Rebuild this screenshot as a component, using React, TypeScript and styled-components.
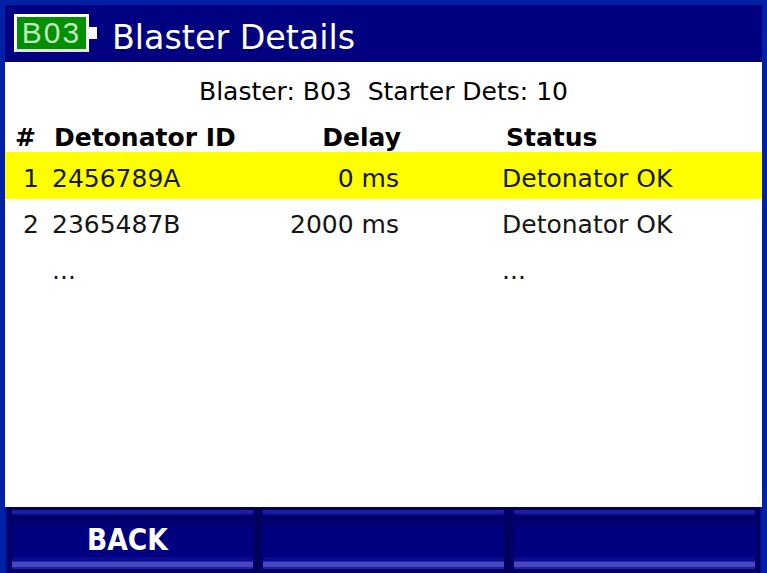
import React from 'react';
import styled, { createGlobalStyle } from 'styled-components';

const GlobalStyle = createGlobalStyle`
  html, body {
    margin: 0;
    padding: 0;
    background: #0020a8;
  }
  body {
    font-family: "DejaVu Sans", sans-serif;
  }
`;

const Screen = styled.div`
  width: 767px;
  height: 573px;
  box-sizing: border-box;
  padding: 5px 5px 0;
  display: flex;
  flex-direction: column;
  background: #0020a8;
  overflow: hidden;
`;

const Header = styled.header`
  height: 57px;
  flex: none;
  box-sizing: border-box;
  padding: 9px 0 0 9px;
  display: flex;
  align-items: flex-start;
  background: linear-gradient(to bottom, #000080 0, #000080 54px, #000070 54px);
`;

const Battery = styled.div`
  display: flex;
  align-items: center;
  flex: none;
`;

const BatteryBody = styled.div`
  width: 75px;
  height: 38px;
  box-sizing: border-box;
  border: 3px solid #fff;
  border-bottom-color: #e4e4e4;
  background: #009000;
  color: #c0e8c0;
  font-family: "Liberation Sans", sans-serif;
  font-size: 30px;
  line-height: 32px;
  letter-spacing: 2px;
  text-align: center;
`;

const BatteryTip = styled.div`
  width: 8px;
  height: 12px;
  background: #fff;
`;

const Title = styled.h1`
  margin: 3px 0 0 15px;
  font-size: 33.3px;
  font-weight: 400;
  line-height: 42px;
  color: #fff;
`;

const Content = styled.main`
  flex: 1;
  background: #fff;
  color: #000;
`;

const Summary = styled.div`
  height: 60px;
  font-size: 25px;
  line-height: 60px;
  text-align: center;
  white-space: pre;
`;

const HeaderRow = styled.div`
  display: grid;
  grid-template-columns: 49px 180px 167px 1fr;
  height: 30px;
  font-size: 25px;
  font-weight: 700;
  line-height: 32px;
  white-space: nowrap;
`;

const Row = styled.div<{ $active?: boolean }>`
  display: grid;
  grid-template-columns: 47px 180px 167px 1fr;
  height: ${(p) => (p.$active ? '47px' : '46px')};
  font-size: 25px;
  line-height: ${(p) => (p.$active ? '54px' : '52px')};
  color: #161616;
  background: ${(p) => (p.$active ? '#ffff00' : 'transparent')};
`;

const IndexCell = styled.span`
  text-align: right;
  padding-right: 13px;
`;

const HeaderIndex = styled.span`
  padding-left: 10px;
`;

const DelayCell = styled.span`
  text-align: right;
  white-space: nowrap;
`;

const StatusCell = styled.span<{ $head?: boolean }>`
  padding-left: ${(p) => (p.$head ? '105px' : '103px')};
  white-space: nowrap;
`;

const Footer = styled.footer`
  height: 66px;
  flex: none;
  display: grid;
  grid-template-columns: repeat(3, 248px);
  gap: 3px;
  padding: 0 0 0 1px;
  box-sizing: border-box;
  border-left: 2px solid #0010a0;
  border-right: 2px solid #0010a0;
  background: #000050;
`;

const SoftKey = styled.button`
  border: 0;
  padding: 0 10px 0 0;
  margin: 0;
  height: 66px;
  font-family: "DejaVu Sans Condensed", "DejaVu Sans", sans-serif;
  font-size: 29.5px;
  font-weight: 700;
  color: #fff;
  border-left: 4px solid #000068;
  border-right: 3px solid #000068;
  background: linear-gradient(
    to bottom,
    #000060 0, #000060 3px,
    #2020a0 3px, #2020a0 6px,
    #0c1498 6px, #0c1498 8px,
    #000068 8px, #000068 14px,
    #000070 14px, #000070 20px,
    #000080 20px, #000080 50px,
    #0a0a90 50px, #0a0a90 54px,
    #2828a8 54px, #2828a8 55px,
    #4848c0 55px, #4848c0 60px,
    #2020a0 60px, #2020a0 62px,
    #000070 62px, #000050 66px
  );
`;

const rows = [
  { n: '1', id: '2456789A', delay: '0 ms', status: 'Detonator OK', active: true },
  { n: '2', id: '2365487B', delay: '2000 ms', status: 'Detonator OK' },
  { n: '', id: '...', delay: '', status: '...' },
];

export default function App() {
  return (
    <Screen>
      <GlobalStyle />
      <Header>
        <Battery>
          <BatteryBody>B03</BatteryBody>
          <BatteryTip />
        </Battery>
        <Title>Blaster Details</Title>
      </Header>
      <Content>
        <Summary>Blaster: B03  Starter Dets: 10</Summary>
        <HeaderRow>
          <HeaderIndex>#</HeaderIndex>
          <span>Detonator ID</span>
          <DelayCell>Delay</DelayCell>
          <StatusCell $head>Status</StatusCell>
        </HeaderRow>
        {rows.map((r) => (
          <Row key={r.n + r.id} $active={r.active}>
            <IndexCell>{r.n}</IndexCell>
            <span>{r.id}</span>
            <DelayCell>{r.delay}</DelayCell>
            <StatusCell>{r.status}</StatusCell>
          </Row>
        ))}
      </Content>
      <Footer>
        <SoftKey>BACK</SoftKey>
        <SoftKey />
        <SoftKey />
      </Footer>
    </Screen>
  );
}
